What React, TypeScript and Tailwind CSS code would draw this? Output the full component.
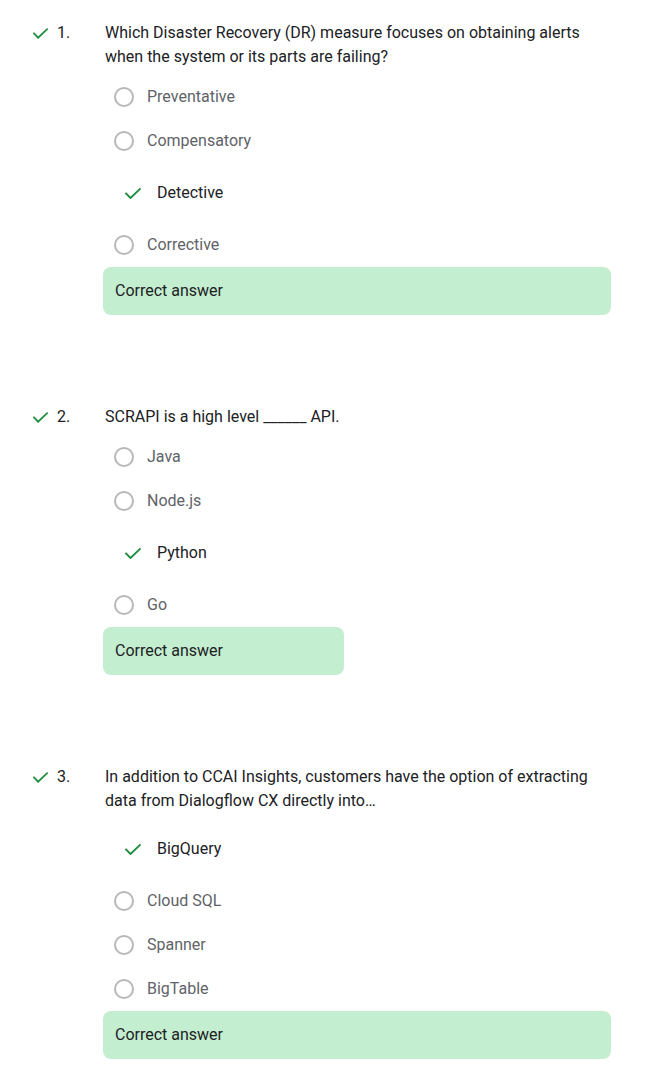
import React from "react";

type Opt = { label: string; correct?: boolean };
type Q = { n: number; text: string; opts: Opt[]; boxW: string };

const questions: Q[] = [
  {
    n: 1,
    text: "Which Disaster Recovery (DR) measure focuses on obtaining alerts when the system or its parts are failing?",
    opts: [
      { label: "Preventative" },
      { label: "Compensatory" },
      { label: "Detective", correct: true },
      { label: "Corrective" },
    ],
    boxW: "w-[508px]",
  },
  {
    n: 2,
    text: "SCRAPI is a high level ______ API.",
    opts: [
      { label: "Java" },
      { label: "Node.js" },
      { label: "Python", correct: true },
      { label: "Go" },
    ],
    boxW: "w-[241px]",
  },
  {
    n: 3,
    text: "In addition to CCAI Insights, customers have the option of extracting data from Dialogflow CX directly into…",
    opts: [
      { label: "BigQuery", correct: true },
      { label: "Cloud SQL" },
      { label: "Spanner" },
      { label: "BigTable" },
    ],
    boxW: "w-[508px]",
  },
];

function Check({ className }: { className?: string }) {
  return (
    <svg viewBox="0 0 16 11" className={className} fill="none">
      <path d="M1 5.5 L5.5 10 L15 1" stroke="#1e8e3e" strokeWidth="1.9" strokeLinecap="square" />
    </svg>
  );
}

export default function App() {
  return (
    <div
      className="bg-white min-h-[1084px] w-[670px] pt-[21px] text-[16px] text-[#202124]"
      style={{ fontFamily: "Roboto, 'Noto Sans', sans-serif" }}
    >
      {questions.map((q, i) => (
        <div key={q.n} className={i > 0 ? "mt-[90px]" : ""}>
          <div className="flex pl-[33px]">
            <div className="w-[24px] h-[24px] flex items-center">
              <Check className="w-[15px] h-[11px]" />
            </div>
            <div className="w-[48px] leading-6 text-[#202124]">{q.n}.</div>
            <div className="w-[510px] leading-6">{q.text}</div>
          </div>
          <div className="ml-[103px] mt-[6px]">
            {q.opts.map((o) =>
              o.correct ? (
                <div key={o.label} className="h-[60px] flex items-center pl-[22px]">
                  <Check className="w-[16px] h-[11px]" />
                  <span className="ml-[16px] text-[#202124]">{o.label}</span>
                </div>
              ) : (
                <div key={o.label} className="h-[44px] flex items-center pl-[11px]">
                  <div className="w-[20px] h-[20px] rounded-full border-2 border-[#b8b8b8]" />
                  <span className="ml-[13px] text-[#5f6368]">{o.label}</span>
                </div>
              )
            )}
            <div
              className={`${q.boxW} h-[48px] rounded-[8px] bg-[#c4eed0] flex items-center px-[12px] text-[#202124]`}
            >
              Correct answer
            </div>
          </div>
        </div>
      ))}
    </div>
  );
}
